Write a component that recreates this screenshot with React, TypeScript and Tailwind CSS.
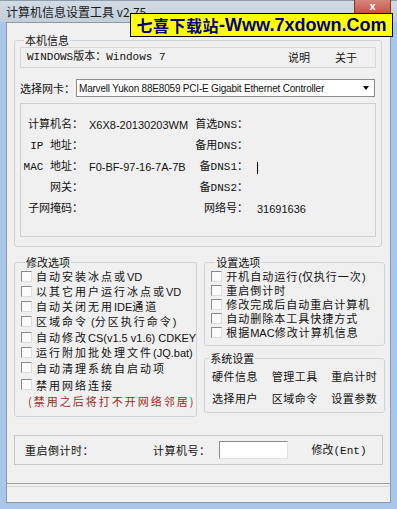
const cjk = { fontFamily: '"Noto Sans CJK SC", "Liberation Sans", sans-serif' };
const mono = { fontFamily: '"Liberation Mono", "Noto Sans CJK SC", monospace' };
const sans = { fontFamily: '"Liberation Sans", "Noto Sans CJK SC", sans-serif' };

// latin runs are drawn narrower than the CJK text, like the old bitmap fonts
const Mixed = ({ text }: { text: string }) => (
  <>
    {text.split(/([\x20-\x7e]+)/).map((part, i) =>
      /[\x20-\x7e]/.test(part) && !/^ +$/.test(part) ? (
        <span key={i} className="text-[11px] tracking-normal" style={sans}>
          {part}
        </span>
      ) : (
        <span key={i}>{part}</span>
      )
    )}
  </>
);

const Check = ({ label, className = "", tight = false }: { label: string; className?: string; tight?: boolean }) => (
  <div className={`flex items-center gap-[4px] ${className}`}>
    <div className="w-[11px] h-[11px] shrink-0 border border-t-[#8a8a8a] border-l-[#8a8a8a] border-r-[#dedede] border-b-[#dedede] bg-[#fbfbfb]" />
    <span
      className={`text-[11px] leading-[12px] text-[#111] whitespace-nowrap ${tight ? "tracking-[1px]" : "tracking-[2px]"}`}
      style={cjk}
    >
      <Mixed text={label} />
    </span>
  </div>
);

const Group = ({ title, className = "", children }: { title: string; className?: string; children: React.ReactNode }) => (
  <fieldset className={`border border-[#cdd4d9] rounded-[3px] ${className}`}>
    <legend className="ml-[4px] px-px text-[11px] leading-[14px] text-[#111]" style={cjk}>
      {title}
    </legend>
    {children}
  </fieldset>
);

const infoRows = [
  { l: "计算机名：", v: "X6X8-20130203WM", r: "首选DNS：", rv: "" },
  { l: "IP 地址：", v: "", r: "备用DNS：", rv: "" },
  { l: "MAC 地址：", v: "F0-BF-97-16-7A-7B", r: "备DNS1：", rv: "caret" },
  { l: "网关：", v: "", r: "备DNS2：", rv: "" },
  { l: "子网掩码：", v: "", r: "网络号：", rv: "31691636" },
];

const leftOpts = [
  "自动安装冰点或VD",
  "以其它用户运行冰点或VD",
  "自动关闭无用IDE通道",
  "区域命令 (分区执行命令)",
  "自动修改CS(v1.5 v1.6) CDKEY",
  "运行附加批处理文件(JQ.bat)",
  "自动清理系统自启动项",
];

const rightOpts = [
  "开机自动运行(仅执行一次)",
  "重启倒计时",
  "修改完成后自动重启计算机",
  "自动删除本工具快捷方式",
  "根据MAC修改计算机信息",
];

export default function App() {
  return (
    <div className="relative w-[397px] h-[509px] flex flex-col bg-[#a9c7e8] overflow-hidden">
      {/* title bar */}
      <div className="h-[22px] shrink-0 flex items-center pl-[6px] bg-gradient-to-b from-[#d3dbe4] to-[#c2cedb] border-t border-[#8e9cab]">
        <span className="text-[12px] text-[#1a1a1a] leading-none" style={cjk}>
          计算机信息设置工具 v2.75
        </span>
      </div>
      {/* close button */}
      <div className="absolute left-[354px] top-0 w-[37px] h-[17px] rounded-b-[4px] bg-gradient-to-b from-[#d9857a] to-[#c2453a] border border-[#7c3a33] border-t-0 flex items-start justify-center">
        <span className="text-white text-[11px] font-bold leading-[12px]" style={sans}>x</span>
      </div>
      {/* watermark banner */}
      <div className="absolute left-[130px] top-[13px] w-[263px] h-[24px] bg-[#ffff00] border border-black flex items-center justify-center text-[#000080] font-bold text-[18px] leading-none" style={sans}>
        <span className="text-[16px] tracking-[0.5px]" style={cjk}>七喜下载站</span>
        <span>-Www.7xdown.Com</span>
      </div>

      <div className="flex-1 flex px-[6px]">
        <div className="flex-1 flex flex-col bg-[#f0f0f0] border border-[#8b9aaa]">
          {/* 本机信息 */}
          <Group title="本机信息" className="mt-[10px] ml-[7px] mr-[8px] px-[5px] pb-[9px]">
            <div className="h-[21px] flex items-center border border-[#d6d6d6] pl-[6px] text-[11px] text-[#111]">
              <span style={mono}>WINDOWS版本：Windows 7</span>
              <span className="ml-auto" style={cjk}>说明</span>
              <span className="ml-[25px] mr-[18px]" style={cjk}>关于</span>
            </div>
            <div className="mt-[11px] flex items-center">
              <span className="w-[56px] text-[11px] text-[#111]" style={cjk}>选择网卡：</span>
              <div className="w-[299px] h-[18px] bg-white border border-[#8c8c8c] flex items-center pl-[2px]">
                <span className="text-[10px] tracking-[-0.2px] text-[#111] whitespace-nowrap" style={sans}>
                  Marvell Yukon 88E8059 PCI-E Gigabit Ethernet Controller
                </span>
                <div className="ml-auto w-[14px] h-[14px] mr-px flex items-center justify-center">
                  <div className="w-0 h-0 border-l-[3px] border-r-[3px] border-t-[4px] border-l-transparent border-r-transparent border-t-black" />
                </div>
              </div>
            </div>
            <div className="mt-[6px] h-[134px] border border-[#cfcfcf] pt-[11px]">
              {infoRows.map((r) => (
                <div key={r.l} className="h-[21px] flex items-center text-[11px] text-[#111] whitespace-nowrap">
                  <span className="w-[62px] text-right" style={mono}>{r.l}</span>
                  <span className="w-[105px] pl-[6px] text-[11px]" style={sans}>{r.v}</span>
                  <span className="w-[60px] text-right" style={mono}>{r.r}</span>
                  <span className="pl-[9px]" style={sans}>
                    {r.rv === "caret" ? <span className="inline-block w-px h-[12px] bg-black align-middle" /> : r.rv}
                  </span>
                </div>
              ))}
            </div>
          </Group>

          <div className="mt-[8px] ml-[7px] flex gap-[7px] items-start">
            <Group title="修改选项" className="w-[181px] h-[162px] pl-[6px]">
              <div className="flex flex-col">
                {leftOpts.map((o, i) => (
                  <Check key={o} label={o} className={`h-[15px] ${i === 4 ? "mt-px" : ""}`} />
                ))}
                <Check label="禁用网络连接" className="h-[15px] mt-[2px]" />
                <span className="mt-[2px] ml-[7px] text-[11px] tracking-[2px] text-[#9b2b1c] leading-[15px] whitespace-nowrap" style={cjk}>
                  (禁用之后将打不开网络邻居)
                </span>
              </div>
            </Group>
            <div className="w-[181px] flex flex-col">
              <Group title="设置选项" className="pl-[6px] pb-[6px]">
                {rightOpts.map((o) => (
                  <Check key={o} label={o} tight className="h-[14px]" />
                ))}
              </Group>
              <Group title="系统设置" className="mt-[5px] pb-[3px]">
                <div className="grid grid-cols-3 text-[11px] text-[#111]" style={cjk}>
                  {["硬件信息", "管理工具", "重启计时", "选择用户", "区域命令", "设置参数"].map((b) => (
                    <div key={b} className="h-[22px] flex items-center justify-center tracking-[0.5px]">{b}</div>
                  ))}
                </div>
              </Group>
            </div>
          </div>

          {/* bottom bar */}
          <div className="mt-[18px] ml-[7px] w-[369px] h-[30px] border border-[#c8c8c8] flex items-center text-[11px] text-[#111]">
            <span className="ml-[10px] w-[128px] tracking-[0.5px]" style={cjk}>重启倒计时：</span>
            <span className="tracking-[0.5px]" style={cjk}>计算机号：</span>
            <div className="ml-[8px] w-[69px] h-[18px] bg-white border border-t-[#8a8a8a] border-l-[#8a8a8a] border-r-[#e3e3e3] border-b-[#e3e3e3]" />
            <span className="ml-[24px]" style={cjk}>修改<span style={mono}>(Ent)</span></span>
          </div>

          {/* status bar */}
          <div className="mt-auto border-t border-[#a0a0a0] pt-[2px]">
            <div className="h-[16px] border-t border-[#d7d7d7] bg-[#f0f0f0]" />
          </div>
        </div>
      </div>
      <div className="h-[6px] shrink-0" />
    </div>
  );
}
